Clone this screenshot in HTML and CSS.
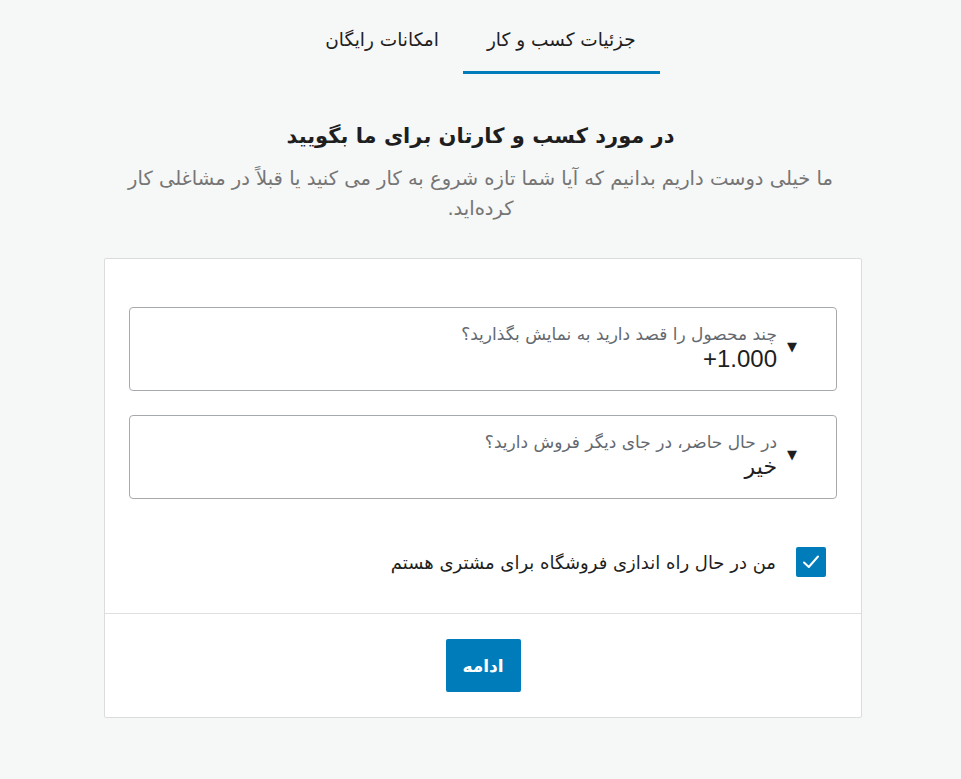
FILE: index.html
```html
<!DOCTYPE html>
<html lang="fa" dir="rtl">
<head>
<meta charset="utf-8">
<link rel="stylesheet" href="styles.css">
</head>
<body>
<nav class="tabs">
  <div class="tab active">جزئیات کسب و کار</div>
  <div class="tab">امکانات رایگان</div>
</nav>
<header class="intro">
  <h1 class="title">در مورد کسب و کارتان برای ما بگویید</h1>
  <p class="subtitle">ما خیلی دوست داریم بدانیم که آیا شما تازه شروع به کار می کنید یا قبلاً در مشاغلی کار کرده‌اید.</p>
</header>
<main class="card">
  <div class="card-body">
    <div class="select">
      <span class="arrow">▼</span>
      <div class="select-content">
        <div class="select-label">چند محصول را قصد دارید به نمایش بگذارید؟</div>
        <div class="select-value num">+1.000</div>
      </div>
    </div>
    <div class="select">
      <span class="arrow">▼</span>
      <div class="select-content">
        <div class="select-label">در حال حاضر، در جای دیگر فروش دارید؟</div>
        <div class="select-value">خیر</div>
      </div>
    </div>
    <label class="check">
      <span class="box"><svg width="22" height="22" viewBox="0 0 22 22"><path d="M4 11.5 L8.8 16 L18 5.5" fill="none" stroke="#fff" stroke-width="2" stroke-linecap="round" stroke-linejoin="round"/></svg></span>
      <span class="check-text">من در حال راه اندازی فروشگاه برای مشتری هستم</span>
    </label>
  </div>
  <div class="card-footer">
    <button class="btn">ادامه</button>
  </div>
</main>
</body>
</html>
```

FILE: styles.css
```css
html, body {
  margin: 0;
  padding: 0;
  background: #f6f7f7;
  font-family: "DejaVu Sans", "Noto Sans", sans-serif;
  color: #1e1e1e;
}
.tabs {
  display: flex;
  justify-content: center;
  height: 74px;
}
.tab {
  font-size: 18.5px;
  padding: 0 24px;
  line-height: 80px;
  height: 71px;
  border-bottom: 3px solid transparent;
  color: #1e1e1e;
}
.tab.active {
  border-bottom-color: #007cba;
}
.intro {
  text-align: center;
  margin: 44px auto 0;
  max-width: 740px;
}
.title {
  font-size: 21px;
  font-weight: bold;
  margin: 0;
  line-height: 36px;
}
.subtitle {
  font-size: 19.5px;
  color: #757575;
  line-height: 30px;
  margin: 10px 0 0;
}
.card {
  display: block;
  margin: 34px 99px 0 104px;
  background: #fff;
  border: 1px solid #dcdcde;
  border-radius: 2px;
}
.card-body {
  padding: 48px 24px 36px;
  display: flex;
  flex-direction: column;
  gap: 24px;
}
.select {
  display: flex;
  align-items: center;
  height: 82px;
  border: 1px solid #a7aaad;
  border-radius: 4px;
  padding-right: 39px;
  gap: 10px;
}
.arrow {
  font-size: 13px;
  font-family: "DejaVu Sans", sans-serif;
  margin-top: -6px;
}
.select-content {
  display: flex;
  flex-direction: column;
  margin-top: -2px;
}
.select-label {
  font-size: 17px;
  color: #646970;
  line-height: 22px;
}
.select-value {
  font-size: 22px;
  line-height: 28px;
  color: #1e1e1e;
}
.select-value.num {
  font-family: "Liberation Sans", sans-serif;
  font-size: 24px;
  direction: ltr;
  text-align: right;
}
.check {
  display: flex;
  align-items: center;
  gap: 20px;
  margin-top: 24px;
  padding-right: 11px;
}
.box {
  width: 30px;
  height: 30px;
  border-radius: 2px;
  background: #007cba;
  display: flex;
  align-items: center;
  justify-content: center;
}
.check-text {
  font-size: 18px;
}
.card-footer {
  border-top: 1px solid #e0e0e0;
  display: flex;
  justify-content: center;
  padding: 25px 0 25px;
}
.btn {
  background: #007cba;
  color: #fff;
  border: none;
  border-radius: 2px;
  font-family: "DejaVu Sans", sans-serif;
  font-weight: bold;
  font-size: 17px;
  width: 75px;
  height: 53px;
}
```
